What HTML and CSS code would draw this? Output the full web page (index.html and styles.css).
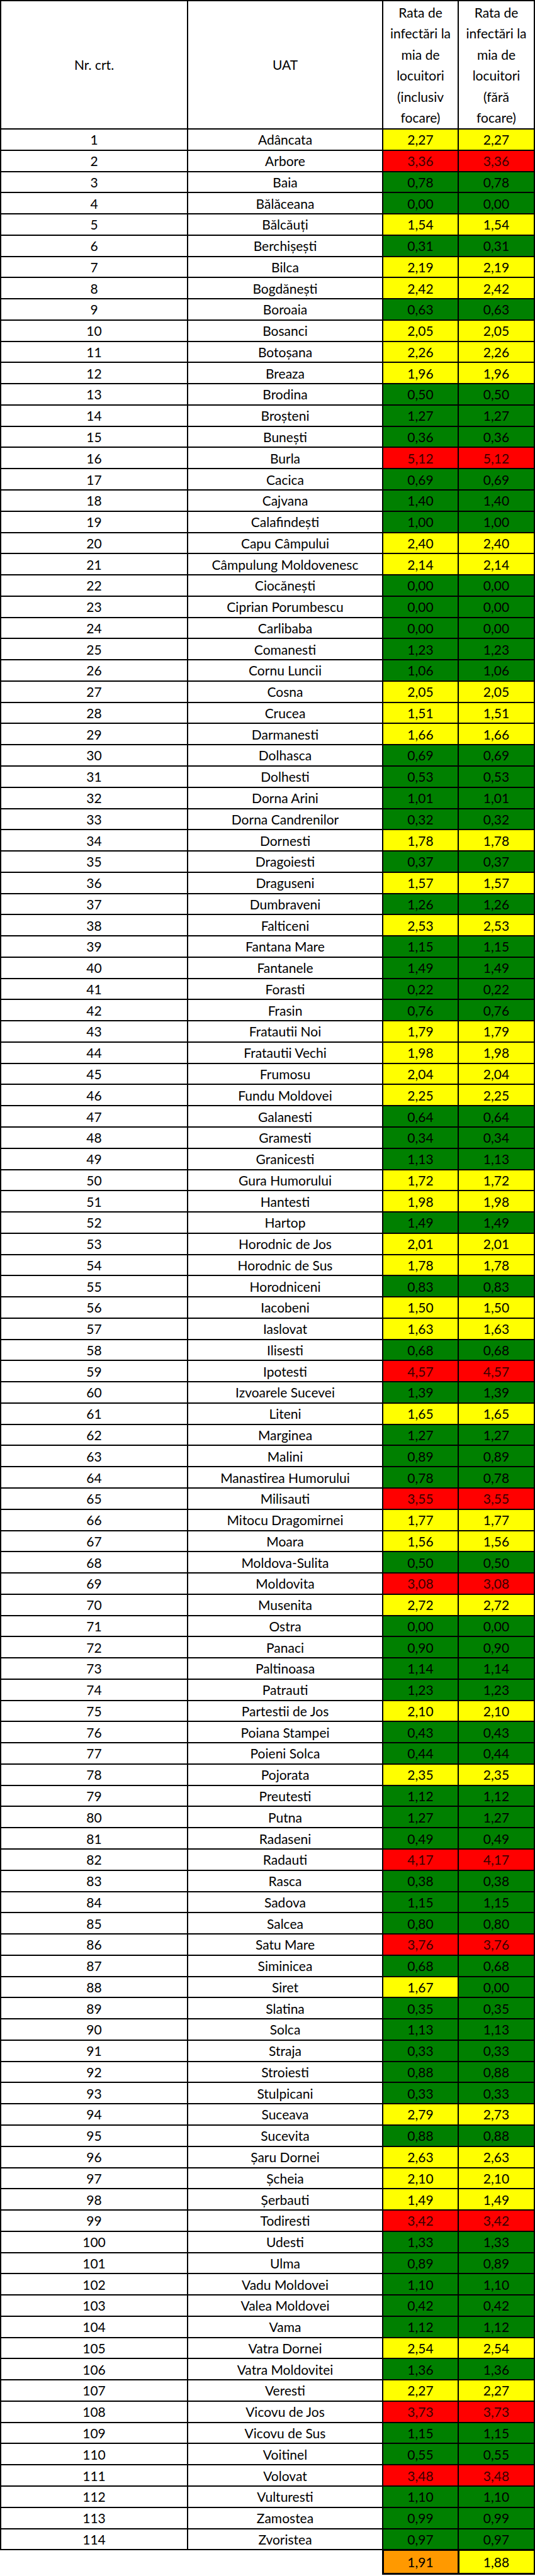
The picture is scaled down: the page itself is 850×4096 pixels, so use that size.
FILE: index.html
```html
<!DOCTYPE html>
<html lang="ro">
<head>
<meta charset="utf-8">
<title>Rata de infectări la mia de locuitori</title>
<link rel="stylesheet" href="styles.css">
</head>
<body>
<table class="sheet">
<colgroup><col class="c1"><col class="c2"><col class="c3"><col class="c4"></colgroup>
<thead>
<tr class="head"><th>Nr. crt.</th><th>UAT</th><th>Rata de<br>infectări la<br>mia de<br>locuitori<br>(inclusiv<br>focare)</th><th>Rata de<br>infectări la<br>mia de<br>locuitori<br>(fără<br>focare)</th></tr>
</thead>
<tbody>
<tr><td>1</td><td>Adâncata</td><td class="y">2,27</td><td class="y">2,27</td></tr>
<tr><td>2</td><td>Arbore</td><td class="r">3,36</td><td class="r">3,36</td></tr>
<tr><td>3</td><td>Baia</td><td class="g">0,78</td><td class="g">0,78</td></tr>
<tr><td>4</td><td>Bălăceana</td><td class="g">0,00</td><td class="g">0,00</td></tr>
<tr><td>5</td><td>Bălcăuți</td><td class="y">1,54</td><td class="y">1,54</td></tr>
<tr><td>6</td><td>Berchișești</td><td class="g">0,31</td><td class="g">0,31</td></tr>
<tr><td>7</td><td>Bilca</td><td class="y">2,19</td><td class="y">2,19</td></tr>
<tr><td>8</td><td>Bogdănești</td><td class="y">2,42</td><td class="y">2,42</td></tr>
<tr><td>9</td><td>Boroaia</td><td class="g">0,63</td><td class="g">0,63</td></tr>
<tr><td>10</td><td>Bosanci</td><td class="y">2,05</td><td class="y">2,05</td></tr>
<tr><td>11</td><td>Botoșana</td><td class="y">2,26</td><td class="y">2,26</td></tr>
<tr><td>12</td><td>Breaza</td><td class="y">1,96</td><td class="y">1,96</td></tr>
<tr><td>13</td><td>Brodina</td><td class="g">0,50</td><td class="g">0,50</td></tr>
<tr><td>14</td><td>Broșteni</td><td class="g">1,27</td><td class="g">1,27</td></tr>
<tr><td>15</td><td>Bunești</td><td class="g">0,36</td><td class="g">0,36</td></tr>
<tr><td>16</td><td>Burla</td><td class="r">5,12</td><td class="r">5,12</td></tr>
<tr><td>17</td><td>Cacica</td><td class="g">0,69</td><td class="g">0,69</td></tr>
<tr><td>18</td><td>Cajvana</td><td class="g">1,40</td><td class="g">1,40</td></tr>
<tr><td>19</td><td>Calafindești</td><td class="g">1,00</td><td class="g">1,00</td></tr>
<tr><td>20</td><td>Capu Câmpului</td><td class="y">2,40</td><td class="y">2,40</td></tr>
<tr><td>21</td><td>Câmpulung Moldovenesc</td><td class="y">2,14</td><td class="y">2,14</td></tr>
<tr><td>22</td><td>Ciocănești</td><td class="g">0,00</td><td class="g">0,00</td></tr>
<tr><td>23</td><td>Ciprian Porumbescu</td><td class="g">0,00</td><td class="g">0,00</td></tr>
<tr><td>24</td><td>Carlibaba</td><td class="g">0,00</td><td class="g">0,00</td></tr>
<tr><td>25</td><td>Comanesti</td><td class="g">1,23</td><td class="g">1,23</td></tr>
<tr><td>26</td><td>Cornu Luncii</td><td class="g">1,06</td><td class="g">1,06</td></tr>
<tr><td>27</td><td>Cosna</td><td class="y">2,05</td><td class="y">2,05</td></tr>
<tr><td>28</td><td>Crucea</td><td class="y">1,51</td><td class="y">1,51</td></tr>
<tr><td>29</td><td>Darmanesti</td><td class="y">1,66</td><td class="y">1,66</td></tr>
<tr><td>30</td><td>Dolhasca</td><td class="g">0,69</td><td class="g">0,69</td></tr>
<tr><td>31</td><td>Dolhesti</td><td class="g">0,53</td><td class="g">0,53</td></tr>
<tr><td>32</td><td>Dorna Arini</td><td class="g">1,01</td><td class="g">1,01</td></tr>
<tr><td>33</td><td>Dorna Candrenilor</td><td class="g">0,32</td><td class="g">0,32</td></tr>
<tr><td>34</td><td>Dornesti</td><td class="y">1,78</td><td class="y">1,78</td></tr>
<tr><td>35</td><td>Dragoiesti</td><td class="g">0,37</td><td class="g">0,37</td></tr>
<tr><td>36</td><td>Draguseni</td><td class="y">1,57</td><td class="y">1,57</td></tr>
<tr><td>37</td><td>Dumbraveni</td><td class="g">1,26</td><td class="g">1,26</td></tr>
<tr><td>38</td><td>Falticeni</td><td class="y">2,53</td><td class="y">2,53</td></tr>
<tr><td>39</td><td>Fantana Mare</td><td class="g">1,15</td><td class="g">1,15</td></tr>
<tr><td>40</td><td>Fantanele</td><td class="g">1,49</td><td class="g">1,49</td></tr>
<tr><td>41</td><td>Forasti</td><td class="g">0,22</td><td class="g">0,22</td></tr>
<tr><td>42</td><td>Frasin</td><td class="g">0,76</td><td class="g">0,76</td></tr>
<tr><td>43</td><td>Fratautii Noi</td><td class="y">1,79</td><td class="y">1,79</td></tr>
<tr><td>44</td><td>Fratautii Vechi</td><td class="y">1,98</td><td class="y">1,98</td></tr>
<tr><td>45</td><td>Frumosu</td><td class="y">2,04</td><td class="y">2,04</td></tr>
<tr><td>46</td><td>Fundu Moldovei</td><td class="y">2,25</td><td class="y">2,25</td></tr>
<tr><td>47</td><td>Galanesti</td><td class="g">0,64</td><td class="g">0,64</td></tr>
<tr><td>48</td><td>Gramesti</td><td class="g">0,34</td><td class="g">0,34</td></tr>
<tr><td>49</td><td>Granicesti</td><td class="g">1,13</td><td class="g">1,13</td></tr>
<tr><td>50</td><td>Gura Humorului</td><td class="y">1,72</td><td class="y">1,72</td></tr>
<tr><td>51</td><td>Hantesti</td><td class="y">1,98</td><td class="y">1,98</td></tr>
<tr><td>52</td><td>Hartop</td><td class="g">1,49</td><td class="g">1,49</td></tr>
<tr><td>53</td><td>Horodnic de Jos</td><td class="y">2,01</td><td class="y">2,01</td></tr>
<tr><td>54</td><td>Horodnic de Sus</td><td class="y">1,78</td><td class="y">1,78</td></tr>
<tr><td>55</td><td>Horodniceni</td><td class="g">0,83</td><td class="g">0,83</td></tr>
<tr><td>56</td><td>Iacobeni</td><td class="y">1,50</td><td class="y">1,50</td></tr>
<tr><td>57</td><td>Iaslovat</td><td class="y">1,63</td><td class="y">1,63</td></tr>
<tr><td>58</td><td>Ilisesti</td><td class="g">0,68</td><td class="g">0,68</td></tr>
<tr><td>59</td><td>Ipotesti</td><td class="r">4,57</td><td class="r">4,57</td></tr>
<tr><td>60</td><td>Izvoarele Sucevei</td><td class="g">1,39</td><td class="g">1,39</td></tr>
<tr><td>61</td><td>Liteni</td><td class="y">1,65</td><td class="y">1,65</td></tr>
<tr><td>62</td><td>Marginea</td><td class="g">1,27</td><td class="g">1,27</td></tr>
<tr><td>63</td><td>Malini</td><td class="g">0,89</td><td class="g">0,89</td></tr>
<tr><td>64</td><td>Manastirea Humorului</td><td class="g">0,78</td><td class="g">0,78</td></tr>
<tr><td>65</td><td>Milisauti</td><td class="r">3,55</td><td class="r">3,55</td></tr>
<tr><td>66</td><td>Mitocu Dragomirnei</td><td class="y">1,77</td><td class="y">1,77</td></tr>
<tr><td>67</td><td>Moara</td><td class="y">1,56</td><td class="y">1,56</td></tr>
<tr><td>68</td><td>Moldova-Sulita</td><td class="g">0,50</td><td class="g">0,50</td></tr>
<tr><td>69</td><td>Moldovita</td><td class="r">3,08</td><td class="r">3,08</td></tr>
<tr><td>70</td><td>Musenita</td><td class="y">2,72</td><td class="y">2,72</td></tr>
<tr><td>71</td><td>Ostra</td><td class="g">0,00</td><td class="g">0,00</td></tr>
<tr><td>72</td><td>Panaci</td><td class="g">0,90</td><td class="g">0,90</td></tr>
<tr><td>73</td><td>Paltinoasa</td><td class="g">1,14</td><td class="g">1,14</td></tr>
<tr><td>74</td><td>Patrauti</td><td class="g">1,23</td><td class="g">1,23</td></tr>
<tr><td>75</td><td>Partestii de Jos</td><td class="y">2,10</td><td class="y">2,10</td></tr>
<tr><td>76</td><td>Poiana Stampei</td><td class="g">0,43</td><td class="g">0,43</td></tr>
<tr><td>77</td><td>Poieni Solca</td><td class="g">0,44</td><td class="g">0,44</td></tr>
<tr><td>78</td><td>Pojorata</td><td class="y">2,35</td><td class="y">2,35</td></tr>
<tr><td>79</td><td>Preutesti</td><td class="g">1,12</td><td class="g">1,12</td></tr>
<tr><td>80</td><td>Putna</td><td class="g">1,27</td><td class="g">1,27</td></tr>
<tr><td>81</td><td>Radaseni</td><td class="g">0,49</td><td class="g">0,49</td></tr>
<tr><td>82</td><td>Radauti</td><td class="r">4,17</td><td class="r">4,17</td></tr>
<tr><td>83</td><td>Rasca</td><td class="g">0,38</td><td class="g">0,38</td></tr>
<tr><td>84</td><td>Sadova</td><td class="g">1,15</td><td class="g">1,15</td></tr>
<tr><td>85</td><td>Salcea</td><td class="g">0,80</td><td class="g">0,80</td></tr>
<tr><td>86</td><td>Satu Mare</td><td class="r">3,76</td><td class="r">3,76</td></tr>
<tr><td>87</td><td>Siminicea</td><td class="g">0,68</td><td class="g">0,68</td></tr>
<tr><td>88</td><td>Siret</td><td class="y">1,67</td><td class="g">0,00</td></tr>
<tr><td>89</td><td>Slatina</td><td class="g">0,35</td><td class="g">0,35</td></tr>
<tr><td>90</td><td>Solca</td><td class="g">1,13</td><td class="g">1,13</td></tr>
<tr><td>91</td><td>Straja</td><td class="g">0,33</td><td class="g">0,33</td></tr>
<tr><td>92</td><td>Stroiesti</td><td class="g">0,88</td><td class="g">0,88</td></tr>
<tr><td>93</td><td>Stulpicani</td><td class="g">0,33</td><td class="g">0,33</td></tr>
<tr><td>94</td><td>Suceava</td><td class="y">2,79</td><td class="y">2,73</td></tr>
<tr><td>95</td><td>Sucevita</td><td class="g">0,88</td><td class="g">0,88</td></tr>
<tr><td>96</td><td>Șaru Dornei</td><td class="y">2,63</td><td class="y">2,63</td></tr>
<tr><td>97</td><td>Șcheia</td><td class="y">2,10</td><td class="y">2,10</td></tr>
<tr><td>98</td><td>Șerbauti</td><td class="y">1,49</td><td class="y">1,49</td></tr>
<tr><td>99</td><td>Todiresti</td><td class="r">3,42</td><td class="r">3,42</td></tr>
<tr><td>100</td><td>Udesti</td><td class="g">1,33</td><td class="g">1,33</td></tr>
<tr><td>101</td><td>Ulma</td><td class="g">0,89</td><td class="g">0,89</td></tr>
<tr><td>102</td><td>Vadu Moldovei</td><td class="g">1,10</td><td class="g">1,10</td></tr>
<tr><td>103</td><td>Valea Moldovei</td><td class="g">0,42</td><td class="g">0,42</td></tr>
<tr><td>104</td><td>Vama</td><td class="g">1,12</td><td class="g">1,12</td></tr>
<tr><td>105</td><td>Vatra Dornei</td><td class="y">2,54</td><td class="y">2,54</td></tr>
<tr><td>106</td><td>Vatra Moldovitei</td><td class="g">1,36</td><td class="g">1,36</td></tr>
<tr><td>107</td><td>Veresti</td><td class="y">2,27</td><td class="y">2,27</td></tr>
<tr><td>108</td><td>Vicovu de Jos</td><td class="r">3,73</td><td class="r">3,73</td></tr>
<tr><td>109</td><td>Vicovu de Sus</td><td class="g">1,15</td><td class="g">1,15</td></tr>
<tr><td>110</td><td>Voitinel</td><td class="g">0,55</td><td class="g">0,55</td></tr>
<tr><td>111</td><td>Volovat</td><td class="r">3,48</td><td class="r">3,48</td></tr>
<tr><td>112</td><td>Vulturesti</td><td class="g">1,10</td><td class="g">1,10</td></tr>
<tr><td>113</td><td>Zamostea</td><td class="g">0,99</td><td class="g">0,99</td></tr>
<tr><td>114</td><td>Zvoristea</td><td class="g">0,97</td><td class="g">0,97</td></tr>
</tbody>
<tfoot>
<tr class="total"><td class="blank"></td><td class="blank"></td><td class="sum o">1,91</td><td class="sum y">1,88</td></tr>
</tfoot>
</table>
</body>
</html>
```

FILE: styles.css
```css
html, body {
  margin: 0;
  padding: 0;
  background: #ffffff;
}

body {
  font-family: Lato, "Open Sans", "Noto Sans", sans-serif;
  font-size: 21px;
  color: #000000;
}

.sheet {
  border-collapse: collapse;
  table-layout: fixed;
  width: 848px;
}

.c1 { width: 297px; }
.c2 { width: 310px; }
.c3 { width: 120px; }
.c4 { width: 121px; }

.sheet th,
.sheet td {
  border: 2px solid #000000;
  padding: 0;
  text-align: center;
  vertical-align: middle;
  font-weight: normal;
  line-height: 1.2;
  white-space: nowrap;
}

.head th {
  height: 202px;
  line-height: 33.5px;
}

.sheet tbody tr {
  height: 33.77px;
}

.y { background: #ffff00; }
.r { background: #ff0000; color: #3a0000; }
.g { background: #008000; color: #000000; }
.o { background: #ff9900; }

.total {
  height: 38px;
}

.sheet .total .blank {
  border: none;
}

.sheet .total .sum {
  border: 3px solid #000000;
}
```
